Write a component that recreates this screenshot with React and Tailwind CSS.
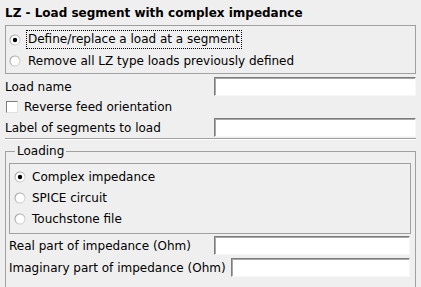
import React, { useId } from 'react';

// Tk-style radio indicator
function Radio({ checked }) {
    const id = useId().replace(/:/g, '');
    return (
        <svg width="12" height="12" viewBox="0 0 12 12" className="shrink-0">
            <defs>
                <linearGradient id={`rg${id}`} x1="0" y1="0" x2="1" y2="1">
                    <stop offset="0" stopColor="#8c8c8c" />
                    <stop offset="1" stopColor="#e6e6e6" />
                </linearGradient>
            </defs>
            <circle cx="6" cy="6" r="5.5" fill={`url(#rg${id})`} />
            <circle cx="6" cy="6" r="4.5" fill="#ffffff" />
            {checked && <circle cx="6" cy="6" r="2.2" fill="#000000" />}
        </svg>
    );
}

function Entry({ className = '' }) {
    return (
        <div
            className={`h-[19px] bg-white border border-t-[#7c7c7c] border-l-[#7c7c7c] border-b-[#f7f7f7] border-r-[#f7f7f7] shadow-[inset_1px_1px_0_#a8a8a8] ${className}`}
        />
    );
}

export default function App() {
    return (
        <div className="w-[421px] h-[287px] bg-[#efefef] px-[5px] text-[12px] text-black font-['DejaVu_Sans',sans-serif] overflow-hidden">
            {/* Title */}
            <div className="h-[25px] flex items-center font-bold">LZ - Load segment with complex impedance</div>

            {/* Action choice */}
            <div className="w-[411px] h-[49px] border border-[#a0a0a0] pt-[3px] pl-[3px]">
                <div className="h-[21px] flex items-center gap-[6px]">
                    <Radio checked />
                    <span className="outline outline-1 outline-dotted outline-black px-[1px] leading-[17px]">
                        Define/replace a load at a segment
                    </span>
                </div>
                <div className="h-[21px] flex items-center gap-[7px]">
                    <Radio />
                    <span>Remove all LZ type loads previously defined</span>
                </div>
            </div>

            {/* Load name */}
            <div className="mt-[3px] h-[19px] flex items-center">
                <span className="w-[209px]">Load name</span>
                <Entry className="w-[202px]" />
            </div>

            {/* Reverse feed */}
            <div className="h-[22px] flex items-center gap-[6px] pl-[1px]">
                <div className="w-[12px] h-[12px] bg-white border border-t-[#7c7c7c] border-l-[#7c7c7c] border-b-[#e0e0e0] border-r-[#e0e0e0]" />
                <span>Reverse feed orientation</span>
            </div>

            {/* Segment label */}
            <div className="h-[19px] flex items-center">
                <span className="w-[209px]">Label of segments to load</span>
                <Entry className="w-[202px]" />
            </div>

            <div className="mt-[1px] w-[411px] border-t border-[#a0a0a0] h-[2px] bg-white" />

            {/* Loading group */}
            <fieldset className="mt-[4px] w-[411px] h-[144px] border border-[#a0a0a0] pl-[3px] pr-[4px]">
                <legend className="ml-[6px] px-[2px] leading-[14px]">Loading</legend>
                <div className="mt-[5px] h-[71px] border border-[#a0a0a0] pt-[2px] pl-[4px]">
                    <div className="h-[21px] flex items-center gap-[6px]">
                        <Radio checked />
                        <span>Complex impedance</span>
                    </div>
                    <div className="h-[21px] flex items-center gap-[6px]">
                        <Radio />
                        <span>SPICE circuit</span>
                    </div>
                    <div className="h-[21px] flex items-center gap-[6px]">
                        <Radio />
                        <span>Touchstone file</span>
                    </div>
                </div>
                <div className="mt-[2px] h-[19px] flex items-center">
                    <span className="w-[205px]">Real part of impedance (Ohm)</span>
                    <Entry className="w-[196px]" />
                </div>
                <div className="mt-[3px] h-[19px] flex items-center">
                    <span className="w-[222px] whitespace-nowrap">Imaginary part of impedance (Ohm)</span>
                    <Entry className="w-[179px]" />
                </div>
            </fieldset>
        </div>
    );
}
